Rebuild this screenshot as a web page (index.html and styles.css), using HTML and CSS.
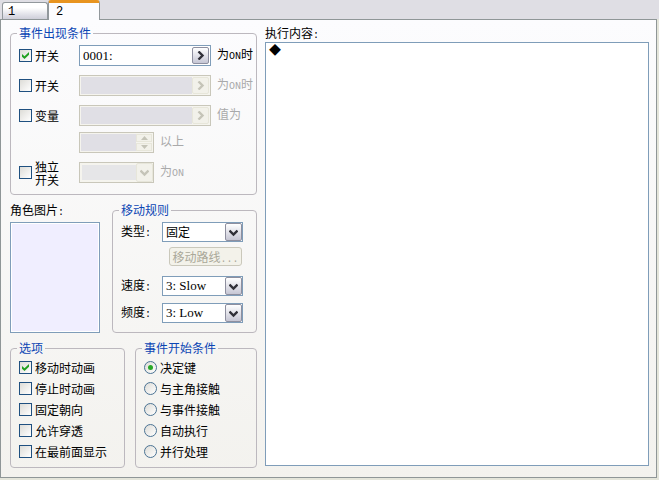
FILE: index.html
```html
<!DOCTYPE html>
<html lang="zh-CN">
<head>
<meta charset="utf-8">
<title>事件页</title>
<link rel="stylesheet" href="styles.css">
</head>
<body>
<div class="tabs" role="tablist">
  <button class="tab" role="tab" aria-selected="false">1</button>
  <button class="tab tab-active" role="tab" aria-selected="true">2</button>
</div>
<main class="page">
  <div class="settings">
    <fieldset class="group conditions">
      <legend>事件出现条件</legend>
      <div class="condition">
        <label class="check"><input type="checkbox" checked>开关</label>
        <div class="field">
          <input class="field-input" type="text" value="0001:" aria-label="开关一">
          <button class="field-button" aria-label="选择开关一"><svg viewBox="0 0 9 9"><path d="M2.5 0.5 6.5 4.5 2.5 8.5"/></svg></button>
        </div>
        <span class="suffix">为<span class="latin">ON</span>时</span>
      </div>
      <div class="condition">
        <label class="check"><input type="checkbox">开关</label>
        <div class="field field-off">
          <input class="field-input" type="text" disabled aria-label="开关二">
          <button class="field-button" disabled aria-label="选择开关二"><svg viewBox="0 0 9 9"><path d="M2.5 0.5 6.5 4.5 2.5 8.5"/></svg></button>
        </div>
        <span class="suffix suffix-off">为<span class="latin">ON</span>时</span>
      </div>
      <div class="variable">
        <div class="condition">
          <label class="check"><input type="checkbox">变量</label>
          <div class="field field-off">
            <input class="field-input" type="text" disabled aria-label="变量">
            <button class="field-button" disabled aria-label="选择变量"><svg viewBox="0 0 9 9"><path d="M2.5 0.5 6.5 4.5 2.5 8.5"/></svg></button>
          </div>
          <span class="suffix suffix-off">值为</span>
        </div>
        <div class="condition condition-short">
          <span></span>
          <div class="field field-off">
            <input class="field-input" type="text" disabled aria-label="变量数值">
            <span class="spin">
              <button disabled aria-label="增加"><svg viewBox="0 0 7 4"><path d="M0 4 3.5 0 7 4Z"/></svg></button>
              <button disabled aria-label="减少"><svg viewBox="0 0 7 4"><path d="M0 0 3.5 4 7 0Z"/></svg></button>
            </span>
          </div>
          <span class="suffix suffix-off">以上</span>
        </div>
      </div>
      <div class="condition condition-short">
        <label class="check check-double"><input type="checkbox"><span>独立<br>开关</span></label>
        <div class="combo combo-off">
          <select disabled aria-label="独立开关"><option></option></select>
          <span class="combo-arrow"><svg viewBox="0 0 9 9"><path d="M0.5 2.5 4.5 6.5 8.5 2.5"/></svg></span>
        </div>
        <span class="suffix suffix-off">为<span class="latin">ON</span></span>
      </div>
    </fieldset>

    <div class="pair">
      <section class="graphic">
        <h2 class="caption">角色图片<span class="latin">:</span></h2>
        <button class="graphic-box" aria-label="角色图片"></button>
      </section>
      <fieldset class="group movement">
        <legend>移动规则</legend>
        <div class="setting">
          <label for="type">类型<span class="latin">:</span></label>
          <div class="combo">
            <select id="type"><option>固定</option></select>
            <span class="combo-arrow"><svg viewBox="0 0 9 9"><path d="M0.5 2.5 4.5 6.5 8.5 2.5"/></svg></span>
          </div>
        </div>
        <button class="route" disabled>移动路线<span class="latin">...</span></button>
        <div class="speeds">
          <div class="setting">
            <label for="speed">速度<span class="latin">:</span></label>
            <div class="combo">
              <select id="speed" class="value"><option>3: Slow</option></select>
              <span class="combo-arrow"><svg viewBox="0 0 9 9"><path d="M0.5 2.5 4.5 6.5 8.5 2.5"/></svg></span>
            </div>
          </div>
          <div class="setting">
            <label for="frequency">频度<span class="latin">:</span></label>
            <div class="combo">
              <select id="frequency" class="value"><option>3: Low</option></select>
              <span class="combo-arrow"><svg viewBox="0 0 9 9"><path d="M0.5 2.5 4.5 6.5 8.5 2.5"/></svg></span>
            </div>
          </div>
        </div>
      </fieldset>
    </div>

    <div class="pair pair-lists">
      <fieldset class="group options">
        <legend>选项</legend>
        <label class="check"><input type="checkbox" checked>移动时动画</label>
        <label class="check"><input type="checkbox">停止时动画</label>
        <label class="check"><input type="checkbox">固定朝向</label>
        <label class="check"><input type="checkbox">允许穿透</label>
        <label class="check"><input type="checkbox">在最前面显示</label>
      </fieldset>
      <fieldset class="group options triggers">
        <legend>事件开始条件</legend>
        <label class="check"><input type="radio" name="trigger" checked>决定键</label>
        <label class="check"><input type="radio" name="trigger">与主角接触</label>
        <label class="check"><input type="radio" name="trigger">与事件接触</label>
        <label class="check"><input type="radio" name="trigger">自动执行</label>
        <label class="check"><input type="radio" name="trigger">并行处理</label>
      </fieldset>
    </div>
  </div>

  <section class="contents">
    <label class="caption" for="commands">执行内容<span class="latin">:</span></label>
    <textarea id="commands" readonly>◆</textarea>
  </section>
</main>
</body>
</html>
```
FILE: styles.css
```css
* {
  box-sizing: border-box;
}

body {
  display: flex;
  flex-direction: column;
  min-height: 100vh;
  margin: 0;
  padding: 0 2px 2px 0;
  background: #e4e5da;
  color: #000;
  font: 12px/14px "Noto Sans CJK SC", sans-serif;
}

button,
input,
select,
textarea {
  margin: 0;
  padding: 0;
  color: inherit;
  font: inherit;
}

.latin {
  font: 10px/8px "Liberation Mono", monospace;
}

/* Tabs */
.tabs {
  display: flex;
  align-items: flex-end;
  height: 19px;
  margin-right: -2px;
  padding-left: 2px;
  background: #dfdee4;
}

.tab {
  width: 46px;
  height: 17px;
  padding-left: 5px;
  border: 1px solid #92989c;
  border-bottom: 0;
  border-radius: 3px 3px 0 0;
  background: linear-gradient(#fff 30%, #ceced9);
  font: 12px/18px "Liberation Mono", monospace;
  text-align: left;
}

.tab-active {
  z-index: 1;
  width: 52px;
  height: 20px;
  margin-bottom: -1px;
  padding-left: 7px;
  border-top: 3px solid #e8941f;
  background: #fcfcfe;
}

/* Page */
.page {
  display: flex;
  flex: 1;
  gap: 8px;
  padding: 6px 7px 9px 9px;
  border: 1px solid #8f9697;
  background: linear-gradient(#fcfcfe, #f3f2ee);
}

.settings {
  display: flex;
  flex: none;
  flex-direction: column;
  gap: 8px;
  width: 247px;
}

.group {
  min-width: 0;
  margin: 0;
  padding: 5px 3px 11px 8px;
  border: 1px solid #bcb8be;
  border-radius: 4px;
}

.group legend {
  margin-left: -2px;
  padding: 0 2px;
  color: #0c46b4;
}

/* Conditions */
.conditions {
  display: flex;
  flex-direction: column;
  gap: 9px;
}

.variable {
  display: flex;
  flex-direction: column;
  gap: 6px;
}

.condition {
  display: grid;
  grid-template-columns: 54px 132px auto;
  grid-template-rows: 21px;
  column-gap: 6px;
}

.condition-short {
  grid-template-columns: 54px 75px auto;
}

.suffix {
  line-height: 18px;
  white-space: nowrap;
}

.suffix-off {
  color: #a9a9aa;
}

.check {
  display: flex;
  align-items: center;
  gap: 3px;
  white-space: nowrap;
}

.check-double {
  line-height: 13px;
}

.check input {
  display: grid;
  flex: none;
  place-items: center;
  width: 13px;
  height: 13px;
  border: 1px solid #1f5080;
  background: linear-gradient(135deg, #dddcd7, #fff);
  appearance: none;
}

.check input[type="radio"] {
  border-color: #4b7394;
  border-radius: 50%;
}

.check input[type="checkbox"]:checked::before {
  width: 7px;
  height: 7px;
  background: #21a121;
  clip-path: polygon(0 30%, 36% 62%, 100% 0, 100% 38%, 36% 100%, 0 68%);
  content: "";
}

.check input[type="radio"]:checked::before {
  width: 5px;
  height: 5px;
  border-radius: 50%;
  background: #28a828;
  content: "";
}

/* Fields */
.field,
.combo {
  display: flex;
  min-width: 0;
  border: 1px solid #7f9db9;
  background: #fff;
}

.field {
  padding: 1px;
}

.field-input {
  flex: 1;
  min-width: 0;
  padding-left: 2px;
  border: 0;
  background: transparent;
  font: 13px/14px "Liberation Serif", serif;
}

.field-button,
.combo-arrow {
  display: grid;
  place-items: center;
  width: 17px;
  padding: 0;
  border: 1px solid #8e8f9f;
  border-radius: 2px;
  background: linear-gradient(#fff, #c6c6d4);
}

.field svg,
.combo svg {
  width: 9px;
  height: 9px;
  fill: none;
  stroke: #303038;
  stroke-width: 2.4;
}

.spin {
  display: grid;
  grid-template-rows: 1fr 1fr;
  gap: 1px;
  width: 16px;
}

.spin button {
  display: grid;
  place-items: center;
  border: 1px solid #e7e6da;
  background: #f2f1ea;
}

.field .spin svg {
  width: 7px;
  height: 4px;
  fill: #c5c4b8;
  stroke: none;
}

.combo {
  position: relative;
  height: 20px;
}

.combo select {
  flex: 1;
  min-width: 0;
  padding: 0 17px 0 3px;
  border: 0;
  border-radius: 0;
  background: transparent;
  appearance: none;
}

.combo .value {
  font: 13px/14px "Liberation Serif", serif;
}

.combo-arrow {
  position: absolute;
  top: 0;
  right: 0;
  bottom: 0;
  pointer-events: none;
}

.field-off,
.combo-off {
  border-color: #c9c7ba;
  background: #f5f4ee;
}

.combo-off {
  height: 21px;
  padding: 2px;
}

.field-off .field-input,
.combo-off select {
  background: #e0dfe5;
}

.field-off .field-button,
.combo-off .combo-arrow {
  border-color: #e7e6da;
  background: #f2f1ea;
}

.field-off svg,
.combo-off svg {
  stroke: #c5c4b8;
}

/* Graphic and movement */
.pair {
  display: grid;
  grid-template-columns: 90px 145px;
  justify-content: space-between;
}

.pair-lists {
  grid-template-columns: 115px 122px;
}

.caption {
  margin: 0;
  font-size: 12px;
  font-weight: 400;
}

.graphic {
  display: flex;
  flex-direction: column;
  gap: 5px;
}

.graphic-box {
  flex: 1;
  border: 1px solid #7f9db9;
  background: #f0eeff;
  box-shadow: inset 0 0 0 1px #fff;
}

.movement {
  padding: 5px 13px 9px 8px;
}

.setting {
  display: grid;
  grid-template-columns: 1fr 81px;
  grid-template-rows: 20px;
}

.setting label {
  line-height: 18px;
}

.route {
  display: block;
  width: 73px;
  height: 19px;
  margin: 5px 1px 10px auto;
  border: 1px solid #cac8bb;
  border-radius: 3px;
  background: #f3f2ea;
  color: #aaa899;
  line-height: 16px;
  white-space: nowrap;
}

.speeds {
  display: grid;
  gap: 7px;
}

/* Options */
.options {
  padding: 2px 3px 5px 8px;
}

.options .check {
  height: 21px;
}

/* Command list */
.contents {
  display: flex;
  flex: 1;
  flex-direction: column;
  gap: 2px;
  min-width: 0;
  padding-bottom: 2px;
}

.contents textarea {
  flex: 1;
  padding: 0 3px;
  border: 1px solid #7f9db9;
  border-radius: 0;
  background: #fff;
  resize: none;
}
```
